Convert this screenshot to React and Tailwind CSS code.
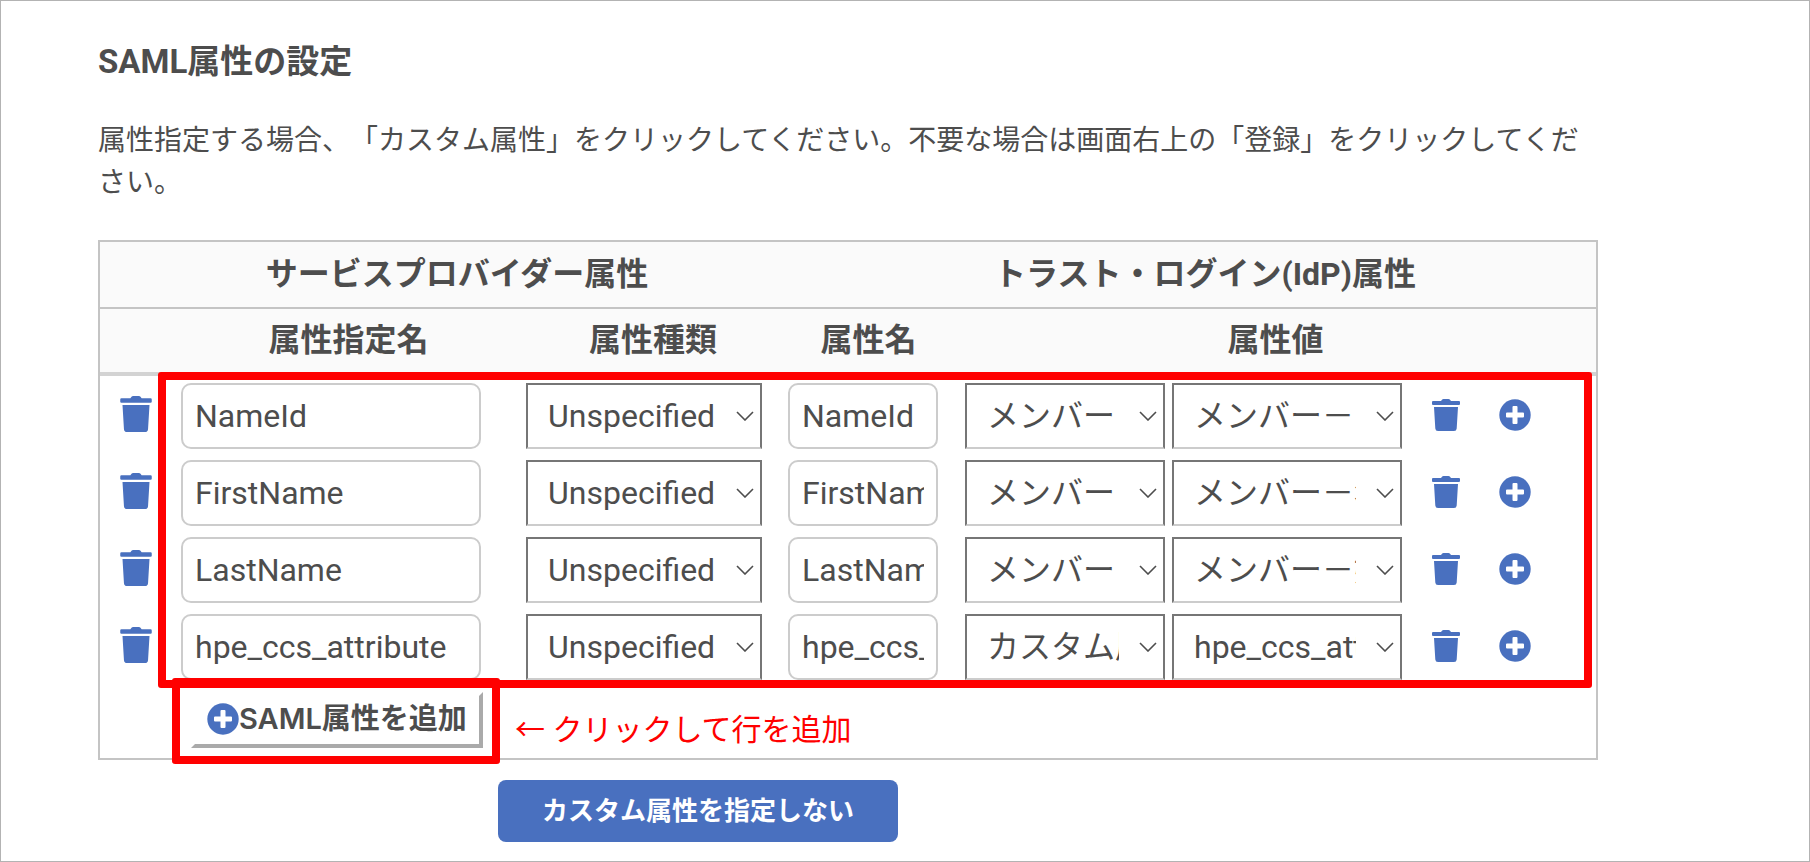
import React from "react";

const rows = [
  { name: "NameId", member: "メンバー", value: "メンバー－メールアドレス" },
  { name: "FirstName", member: "メンバー", value: "メンバー－名" },
  { name: "LastName", member: "メンバー", value: "メンバー－姓" },
  { name: "hpe_ccs_attribute", member: "カスタム属性", value: "hpe_ccs_attribute" },
];

const TrashIcon = ({ className }) => (
  <svg viewBox="0 0 28 32" fill="currentColor" className={className} aria-hidden="true">
    <path d="M1 2h8l1-1.3Q10.500 0 11.500 0h5Q17.500 0 18 .7L19 2h8q1 0 1 1v2q0 1-1 1H1Q0 6 0 5V3q0-1 1-1zM2 8h24l-1.300 21.500Q24.500 32 22 32H6q-2.500 0-2.700-2.500z" />
  </svg>
);

const PlusCircleIcon = ({ className }) => (
  <svg viewBox="0 0 32 32" className={className} aria-hidden="true">
    <circle cx="16" cy="16" r="15.700" fill="currentColor" />
    <path d="M14.500 7h3q1 0 1 1v5.500H24q1 0 1 1v3q0 1-1 1h-5.500V24q0 1-1 1h-3q-1 0-1-1v-5.500H8q-1 0-1-1v-3q0-1 1-1h5.500V8q0-1 1-1z" fill="white" />
  </svg>
);

const TextBox = ({ label, value }) => (
  <input type="text" aria-label={label} defaultValue={value} className="block w-full h-[66px] px-3 border-2 border-[#ccc] rounded-[10px] bg-white text-[32px]" />
);

const SelectBox = ({ label, value, className }) => (
  <div className={`relative ${className}`}>
    <select aria-label={label} defaultValue={value} className="block appearance-none w-full h-[66px] pl-5 pr-11 border-2 border-[#767676] border-b-[#ccc] bg-white text-[32px]">
      <option>{value}</option>
    </select>
    <svg viewBox="0 0 18 10" fill="none" stroke="currentColor" strokeWidth="1.600" className="absolute right-2 top-7 w-[18px] h-[10px] pointer-events-none" aria-hidden="true">
      <path d="M1 1l8 8 8-8" />
    </svg>
  </div>
);

const App = () => {
  return (
    <div className="min-h-screen bg-white border border-[#b3b3b3] pl-[97px] pr-6 pt-[37px] pb-[17px] text-[#4d4d4d] font-[Roboto,'Noto_Sans_CJK_JP',sans-serif] [text-spacing-trim:space-all]">
      <div className="max-w-[1500px]">
        <h1 className="text-[33px] leading-[48px] font-bold">SAML属性の設定</h1>
        <p className="mt-[34px] text-[28px] leading-[42px]">
          属性指定する場合、「カスタム属性」をクリックしてください。不要な場合は画面右上の「登録」をクリックしてください。
        </p>

        <div className="relative mt-9 border-2 border-[#c4c4c4]">
          <table className="w-full table-fixed border-separate border-spacing-0">
            <colgroup>
              <col className="w-[71px]" />
              <col className="w-[355px]" />
              <col className="w-[254px]" />
              <col className="w-[177px]" />
              <col />
            </colgroup>
            <thead className="bg-[#fafafa] text-[32px] leading-[48px]">
              <tr>
                <th colSpan={3} className="h-[67px] pl-[34px] pb-0.5 border-b-2 border-[#c4c4c4]">サービスプロバイダー属性</th>
                <th colSpan={2} className="h-[67px] pl-[34px] pb-0.5 border-b-2 border-[#c4c4c4]">トラスト・ログイン(IdP)属性</th>
              </tr>
              <tr>
                <th className="border-b-4 border-[#d3d3d3]"></th>
                <th className="h-[67px] pb-0.5 border-b-4 border-[#d3d3d3]">属性指定名</th>
                <th className="h-[67px] pb-0.5 border-b-4 border-[#d3d3d3]">属性種類</th>
                <th className="h-[67px] pb-0.5 border-b-4 border-[#d3d3d3]">属性名</th>
                <th className="h-[67px] pr-0.5 pb-0.5 border-b-4 border-[#d3d3d3]">属性値</th>
              </tr>
            </thead>
            <tbody>
              {rows.map((row) => (
                <tr key={row.name}>
                  <td className="h-[77px] pl-5 pb-0.5">
                    <button type="button" aria-label="削除" className="block text-[#4970bf]">
                      <TrashIcon className="w-8 h-9" />
                    </button>
                  </td>
                  <td className="pl-[10px] pr-[45px] pt-[7px] pb-1">
                    <TextBox label="属性指定名" value={row.name} />
                  </td>
                  <td className="pr-[18px] pt-[7px] pb-1">
                    <SelectBox label="属性種類" value="Unspecified" className="w-full" />
                  </td>
                  <td className="pl-2 pr-[19px] pt-[7px] pb-1">
                    <TextBox label="属性名" value={row.name} />
                  </td>
                  <td className="pl-2 pt-[7px] pb-1">
                    <div className="flex items-center">
                      <SelectBox label="メンバー種別" value={row.member} className="w-[200px]" />
                      <SelectBox label="属性値" value={row.value} className="w-[230px] ml-[7px]" />
                      <button type="button" aria-label="値を削除" className="ml-[30px] mb-0.5 text-[#4970bf]">
                        <TrashIcon className="w-7 h-8" />
                      </button>
                      <button type="button" aria-label="値を追加" className="ml-[39px] mb-0.5 text-[#4970bf]">
                        <PlusCircleIcon className="w-8 h-8" />
                      </button>
                    </div>
                  </td>
                </tr>
              ))}
            </tbody>
          </table>

          <div className="flex items-start h-[74px] pt-2 pl-[91px]">
            <div className="relative">
              <button type="button" className="flex items-center w-[292px] h-[56px] pl-3 pb-0.5 border-4 border-t-white border-l-white border-[#aaa] bg-white text-[29px] font-semibold">
                <PlusCircleIcon className="w-8 h-8 shrink-0 text-[#4970bf]" />
                <span className="whitespace-nowrap font-[Inter,'Noto_Sans_CJK_JP',sans-serif]">SAML属性を追加</span>
              </button>
              {/* Penanda tombol tambah */}
              <div className="absolute -top-[14px] -bottom-4 -left-[19px] -right-[17px] border-8 border-[#f00] rounded-[3px] pointer-events-none"></div>
            </div>
            <span className="ml-8 mt-4 text-[30px] leading-[44px] text-[#f00] whitespace-nowrap">← クリックして行を追加</span>
          </div>

          {/* Penanda baris atribut */}
          <div className="absolute top-[130px] left-[58px] right-1 h-[316px] border-8 border-[#f00] rounded-[3px] pointer-events-none"></div>
        </div>

        <button type="button" className="block mt-5 ml-[400px] w-[400px] h-[62px] rounded-lg bg-[#4970bf] text-white text-[26px] font-bold">
          カスタム属性を指定しない
        </button>
      </div>
    </div>
  );
};

export default App;
